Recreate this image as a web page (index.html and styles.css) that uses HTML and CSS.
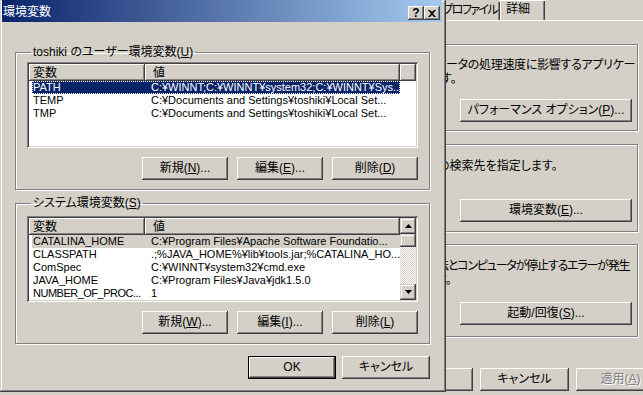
FILE: index.html
```html
<!DOCTYPE html>
<html lang="ja">
<head>
<meta charset="utf-8">
<title>環境変数</title>
<link rel="stylesheet" href="styles.css">
</head>
<body>
<div class="backwin">
  <div class="tabs">
    <span class="tab">プロファイル</span>
    <span class="tab sel">詳細</span>
  </div>
  <div class="panel">
    <div class="bgrp g1">
      <div class="ln l1">ータの処理速度に影響するアプリケー</div>
      <div class="ln l2">す。</div>
      <div class="brow"><button class="btn wide">パフォーマンス オプション(<u>P</u>)...</button></div>
    </div>
    <div class="bgrp g2">
      <div class="ln l3">の検索先を指定します。</div>
      <div class="brow"><button class="btn wide">環境変数(<u>E</u>)...</button></div>
    </div>
    <div class="bgrp g3">
      <div class="ln l4">法とコンピュータが停止するエラーが発生</div>
      <div class="ln l5">す。</div>
      <div class="brow"><button class="btn wide">起動/回復(<u>S</u>)...</button></div>
    </div>
  </div>
  <div class="foot">
    <button class="btn fbtn">OK</button>
    <button class="btn fbtn">キャンセル</button>
    <button class="btn fbtn dis">適用(<u>A</u>)</button>
  </div>
</div>

<div class="dialog">
  <div class="titlebar">
    <span class="ttext">環境変数</span>
    <span class="cbtns">
      <span class="cbtn help">?</span>
      <span class="cbtn close"><svg width="8" height="7" viewBox="0 0 8 7"><path d="M0 0h2l2 2 2-2h2L5 3.5 8 7H6L4 5 2 7H0l3-3.5z" fill="#000"/></svg></span>
    </span>
  </div>
  <div class="client">
    <fieldset class="grp">
      <legend>toshiki のユーザー環境変数(<u>U</u>)</legend>
      <div class="list ul">
        <div class="hdr"><span class="hc c1">変数</span><span class="hc c2">値</span><span class="hc fill"></span></div>
        <div class="row sel"><span class="c1">PATH</span><span class="c2">C:¥WINNT;C:¥WINNT¥system32;C:¥WINNT¥Sys...</span></div>
        <div class="row"><span class="c1">TEMP</span><span class="c2">C:¥Documents and Settings¥toshiki¥Local Set...</span></div>
        <div class="row"><span class="c1">TMP</span><span class="c2">C:¥Documents and Settings¥toshiki¥Local Set...</span></div>
      </div>
      <div class="brow3">
        <button class="btn gb">新規(<u>N</u>)...</button>
        <button class="btn gb">編集(<u>E</u>)...</button>
        <button class="btn gb">削除(<u>D</u>)</button>
      </div>
    </fieldset>
    <fieldset class="grp g2d">
      <legend>システム環境変数(<u>S</u>)</legend>
      <div class="list sl">
        <div class="lmain">
          <div class="hdr"><span class="hc c1">変数</span><span class="hc c2">値</span></div>
          <div class="row isel"><span class="c1">CATALINA_HOME</span><span class="c2">C:¥Program Files¥Apache Software Foundatio...</span></div>
          <div class="row"><span class="c1">CLASSPATH</span><span class="c2">.;%JAVA_HOME%¥lib¥tools.jar;%CATALINA_HO...</span></div>
          <div class="row"><span class="c1">ComSpec</span><span class="c2">C:¥WINNT¥system32¥cmd.exe</span></div>
          <div class="row"><span class="c1">JAVA_HOME</span><span class="c2">C:¥Program Files¥Java¥jdk1.5.0</span></div>
          <div class="row"><span class="c1 tight">NUMBER_OF_PROC...</span><span class="c2">1</span></div>
        </div>
        <div class="sbar">
          <span class="sb-btn"><svg width="7" height="4" viewBox="0 0 7 4"><path d="M3.5 0L7 4H0z" fill="#000"/></svg></span>
          <span class="sb-thumb"></span>
          <span class="sb-track"></span>
          <span class="sb-btn"><svg width="7" height="4" viewBox="0 0 7 4"><path d="M0 0h7L3.5 4z" fill="#000"/></svg></span>
        </div>
      </div>
      <div class="brow3">
        <button class="btn gb">新規(<u>W</u>)...</button>
        <button class="btn gb">編集(<u>I</u>)...</button>
        <button class="btn gb">削除(<u>L</u>)</button>
      </div>
    </fieldset>
    <div class="okrow">
      <button class="btn dbtn default">OK</button>
      <button class="btn dbtn">キャンセル</button>
    </div>
  </div>
</div>
</body>
</html>
```

FILE: styles.css
```css
* { box-sizing: border-box; }
html, body { margin: 0; padding: 0; }
body {
  width: 643px;
  height: 395px;
  overflow: hidden;
  position: relative;
  background: #d4d0c8;
  font-family: "Liberation Sans", "Noto Sans CJK JP", sans-serif;
  font-size: 12px;
  line-height: 14px;
  color: #000;
  font-feature-settings: "palt";
}
u { text-decoration: underline; text-underline-offset: 1px; }

.btn {
  display: inline-flex;
  align-items: center;
  justify-content: center;
  background: #d4d0c8;
  border: none;
  margin: 0;
  padding: 0 0 1px 0;
  font: inherit;
  color: #000;
  box-shadow: inset -1px -1px #404040, inset 1px 1px #fff, inset -2px -2px #808080, inset 2px 2px #d4d0c8;
  white-space: nowrap;
}
.btn.default {
  border: 1px solid #000;
}

/* ---------- background window ---------- */
.backwin {
  position: absolute;
  left: 440px;
  top: 0;
  width: 210px;
  height: 395px;
  background: #d4d0c8;
  display: flex;
  flex-direction: column;
}
.tabs {
  display: flex;
  height: 20px;
  align-items: flex-end;
}
.tab {
  height: 18px;
  flex: none;
  width: 70px;
  margin-left: -10px;
  padding: 1px 3px 0 0;
  text-align: right;
  white-space: nowrap;
  letter-spacing: -1.6px;
  box-shadow: inset -1px 0 #404040, inset -2px 0 #808080;
}
.tab.sel {
  margin-left: 0;
  height: 20px;
  width: 45px;
  text-align: left;
  letter-spacing: 0;
  padding: 2px 0 0 6px;
  box-shadow: inset 1px 1px #fff, inset -1px 0 #404040, inset -2px 0 #808080;
  position: relative;
  z-index: 1;
}
.panel {
  border-top: 1px solid #fff;
  height: 335px;
  padding: 23px 0 0 0;
  box-shadow: inset -1px 0 #404040, inset -2px 0 #808080;
}
.bgrp {
  border: 1px solid #808080;
  box-shadow: inset 1px 1px #fff, 1px 1px #fff;
  margin-right: 12px;
  padding: 13px 0 0 5px;
}
.bgrp.g1 { height: 87px; }
.bgrp.g2 { height: 88px; margin-top: 13px; padding-top: 14px; }
.bgrp.g3 { height: 93px; margin-top: 12px; padding-top: 14px; }
.ln { white-space: nowrap; height: 14px; }
.l1 { letter-spacing: -0.3px; }
.l2 { margin-left: -5px; }
.l3 { margin-left: -8px; }
.l4 { margin-left: -9px; letter-spacing: -1.2px; }
.l5 { margin-left: -10px; }
.brow { padding-left: 14px; }
.g1 .brow { margin-top: 13px; }
.g2 .brow { margin-top: 26px; }
.g3 .brow { margin-top: 15px; }
.btn.wide { width: 172px; height: 23px; }
.foot {
  display: flex;
  gap: 7px;
  margin-top: 13px;
  margin-left: -56px;
}
.fbtn { width: 89px; height: 23px; flex: none; }
.fbtn.dis { color: #808080; text-shadow: 1px 1px #fff; }

/* ---------- dialog ---------- */
.dialog {
  position: absolute;
  left: 0;
  top: 0;
  width: 446px;
  height: 392px;
  z-index: 2;
  background: #d4d0c8;
  padding: 0 4px 4px 2px;
  box-shadow: inset -1px -1px #404040, inset 1px 1px #d4d0c8, inset -2px -2px #808080, inset 2px 2px #fff;
}
.titlebar {
  height: 22px;
  background: linear-gradient(to right, #0a246a, #a6caf0);
  display: flex;
  justify-content: space-between;
  align-items: flex-start;
  color: #fff;
}
.ttext {
  padding: 5px 0 0 1px;
  font-size: 12px;
  line-height: 14px;
}
.cbtns {
  display: flex;
  margin-top: 6px;
  margin-right: 2px;
}
.cbtn {
  width: 16px;
  height: 14px;
  display: flex;
  align-items: center;
  justify-content: center;
  background: #d4d0c8;
  color: #000;
  box-shadow: inset -1px -1px #404040, inset 1px 1px #fff, inset -2px -2px #808080;
}
.help { font-weight: bold; font-size: 12px; line-height: 14px; }

.client {
  padding: 23px 12px 0 13px;
}
.grp {
  margin: 0;
  border: 1px solid #808080;
  box-shadow: inset 1px 1px #fff, 1px 1px #fff;
  padding: 3px 11px 9px 11px;
  min-width: 0;
}
.grp legend {
  padding: 0 2px;
  margin-left: 4px;
  line-height: 14px;
}
.g2d { margin-top: 6px; padding-top: 6px; }

.list {
  background: #fff;
  padding: 2px;
  box-shadow: inset 1px 1px #808080, inset -1px -1px #fff, inset 2px 2px #404040, inset -2px -2px #d4d0c8;
  font-size: 11px;
}
.list.ul { height: 86px; }
.list.sl { height: 86px; display: flex; }
.lmain { flex: 1; }
.hdr {
  display: flex;
  height: 17px;
  background: #d4d0c8;
  font-size: 12px;
}
.hc {
  height: 17px;
  padding: 2px 0 0 4px;
  line-height: 14px;
  box-shadow: inset -1px -1px #404040, inset 1px 1px #fff, inset -2px -2px #808080;
}
.hc.c1 { width: 116px; }
.hc.c2 { width: 255px; padding-left: 8px; }
.hc.fill { flex: 1; }
.row {
  display: flex;
  height: 13px;
  line-height: 13px;
  margin-left: 3px;
  width: 368px;
  white-space: nowrap;
}
.row .c1 { width: 113px; flex: none; padding-left: 1px; }
.row .c1.tight { letter-spacing: -0.5px; }
.row .c2 { padding-left: 6px; }
.row.sel {
  background: #0a246a;
  color: #fff;
  outline: 1px dotted #fff;
  outline-offset: -1px;
}
.row.isel { background: #d4d0c8; }

.sbar {
  width: 16px;
  display: flex;
  flex-direction: column;
}
.sb-btn, .sb-thumb {
  display: flex;
  align-items: center;
  justify-content: center;
  background: #d4d0c8;
  box-shadow: inset -1px -1px #404040, inset 1px 1px #d4d0c8, inset -2px -2px #808080, inset 2px 2px #fff;
}
.sb-btn { height: 16px; flex: none; }
.sb-thumb { height: 13px; flex: none; }
.sb-track {
  flex: 1;
  background: repeating-conic-gradient(#d4d0c8 0 25%, #fff 0 50%) 0 0 / 2px 2px;
}

.brow3 {
  display: flex;
  justify-content: flex-end;
  gap: 9px;
  margin-top: 9px;
}
.gb { width: 86px; height: 23px; }

.okrow {
  display: flex;
  justify-content: flex-end;
  gap: 6px;
  margin-top: 12px;
}
.dbtn { width: 88px; height: 23px; }
```
